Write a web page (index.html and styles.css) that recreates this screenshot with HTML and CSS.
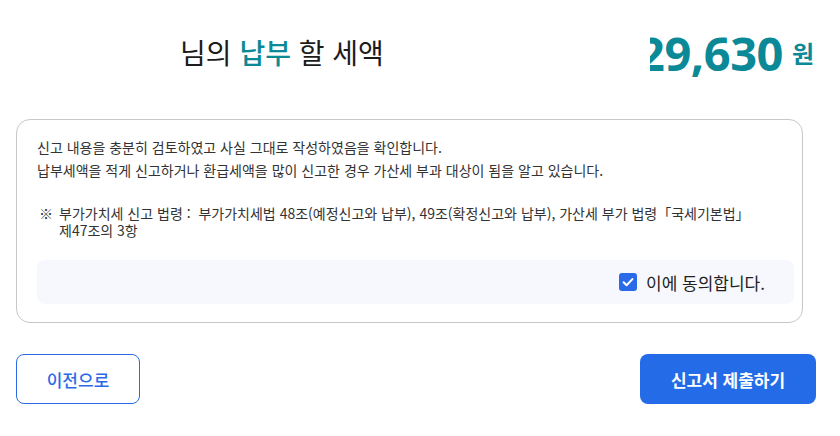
FILE: index.html
```html
<!DOCTYPE html>
<html lang="ko">
<head>
    <meta charset="utf-8">
    <title>신고서 제출</title>
    <link rel="stylesheet" href="styles.css">
</head>
<body>
    <!-- Tax amount header -->
    <div class="summary">
        <h2 class="summary-title">님의 <span class="accent">납부</span> 할 세액</h2>
        <div class="amount">
            <span class="amount-value">1,229,630</span>
            <span class="amount-unit">원</span>
        </div>
    </div>

    <div class="confirm-card">
        <p class="confirm-text">신고 내용을 충분히 검토하였고 사실 그대로 작성하였음을 확인합니다.<br>
        납부세액을 적게 신고하거나 환급세액을 많이 신고한 경우 가산세 부과 대상이 됨을 알고 있습니다.</p>

        <div class="law-note">
            <span class="law-mark">※</span>
            <span>부가가치세 신고 법령 :&nbsp; 부가가치세법 48조(예정신고와 납부), 49조(확정신고와 납부), 가산세 부가 법령「국세기본법」 제47조의 3항</span>
        </div>

        <label class="agree-box">
            <span class="check">
                <svg viewBox="0 0 18 18"><path d="M4.6 9.3l3 3 5.8-6.2" fill="none" stroke="#fff" stroke-width="2" stroke-linecap="round" stroke-linejoin="round"/></svg>
            </span>
            <span class="agree-label">이에 동의합니다.</span>
        </label>
    </div>

    <div class="actions">
        <button class="btn btn-outline">이전으로</button>
        <button class="btn btn-primary">신고서 제출하기</button>
    </div>
</body>
</html>
```

FILE: styles.css
```css
body {
    margin: 0;
    padding: 0 24px 0 16px;
    font-family: "Noto Sans CJK KR", "Noto Sans", sans-serif;
    color: #222;
    background: #fff;
}
.summary {
    display: flex;
    align-items: center;
    height: 119px;
}
.summary-title {
    margin: 0 0 0 164px;
    font-size: 28px;
    font-weight: 400;
    color: #1c1c1c;
    flex: 1;
    padding-bottom: 16px;
}
.accent {
    color: #0b8996;
    font-weight: 500;
}
/* amount is clipped on its left edge */
.amount {
    width: 166px;
    display: flex;
    justify-content: flex-end;
    align-items: center;
    overflow: hidden;
    white-space: nowrap;
    padding-bottom: 14px;
    color: #0b8996;
    font-family: "Noto Sans", sans-serif;
}
.amount-value {
    font-size: 47px;
    font-weight: 700;
    letter-spacing: -0.5px;
}
.amount-unit {
    margin-left: 9px;
    margin-right: 2px;
    font-size: 24px;
    font-weight: 700;
    font-family: "Noto Sans CJK KR", sans-serif;
}
.confirm-card {
    width: 787px;
    box-sizing: border-box;
    border: 1px solid #c8c8c8;
    border-radius: 14px;
    padding: 16px 8px 18px 20px;
}
.confirm-text {
    margin: 0;
    padding-right: 12px;
    font-size: 14px;
    line-height: 23px;
    color: #333;
}
.law-note {
    display: flex;
    gap: 6px;
    margin-top: 23px;
    padding-right: 12px;
    font-size: 14px;
    line-height: 17px;
    color: #333;
    word-break: keep-all;
}
.law-mark {
    flex: none;
    padding-left: 2px;
}
.agree-box {
    display: flex;
    justify-content: flex-end;
    align-items: center;
    gap: 9px;
    margin-top: 21px;
    height: 44px;
    padding-right: 29px;
    background: #f6f8fd;
    border-radius: 8px;
}
.check {
    width: 18px;
    height: 18px;
    border-radius: 3px;
    background: #2a6ae8;
    display: flex;
}
.check svg {
    width: 18px;
    height: 18px;
}
.agree-label {
    font-size: 17px;
    color: #222;
}
.actions {
    display: flex;
    justify-content: space-between;
    margin-top: 31px;
}
.btn {
    height: 50px;
    border-radius: 8px;
    font-family: "Noto Sans CJK KR", sans-serif;
    font-size: 17px;
    cursor: pointer;
}
.btn-outline {
    width: 124px;
    border: 1px solid #2a6ae8;
    background: #fff;
    color: #2a6ae8;
    font-weight: 500;
}
.btn-primary {
    width: 176px;
    border: none;
    background: #246be8;
    color: #fff;
    font-weight: 700;
}
```
